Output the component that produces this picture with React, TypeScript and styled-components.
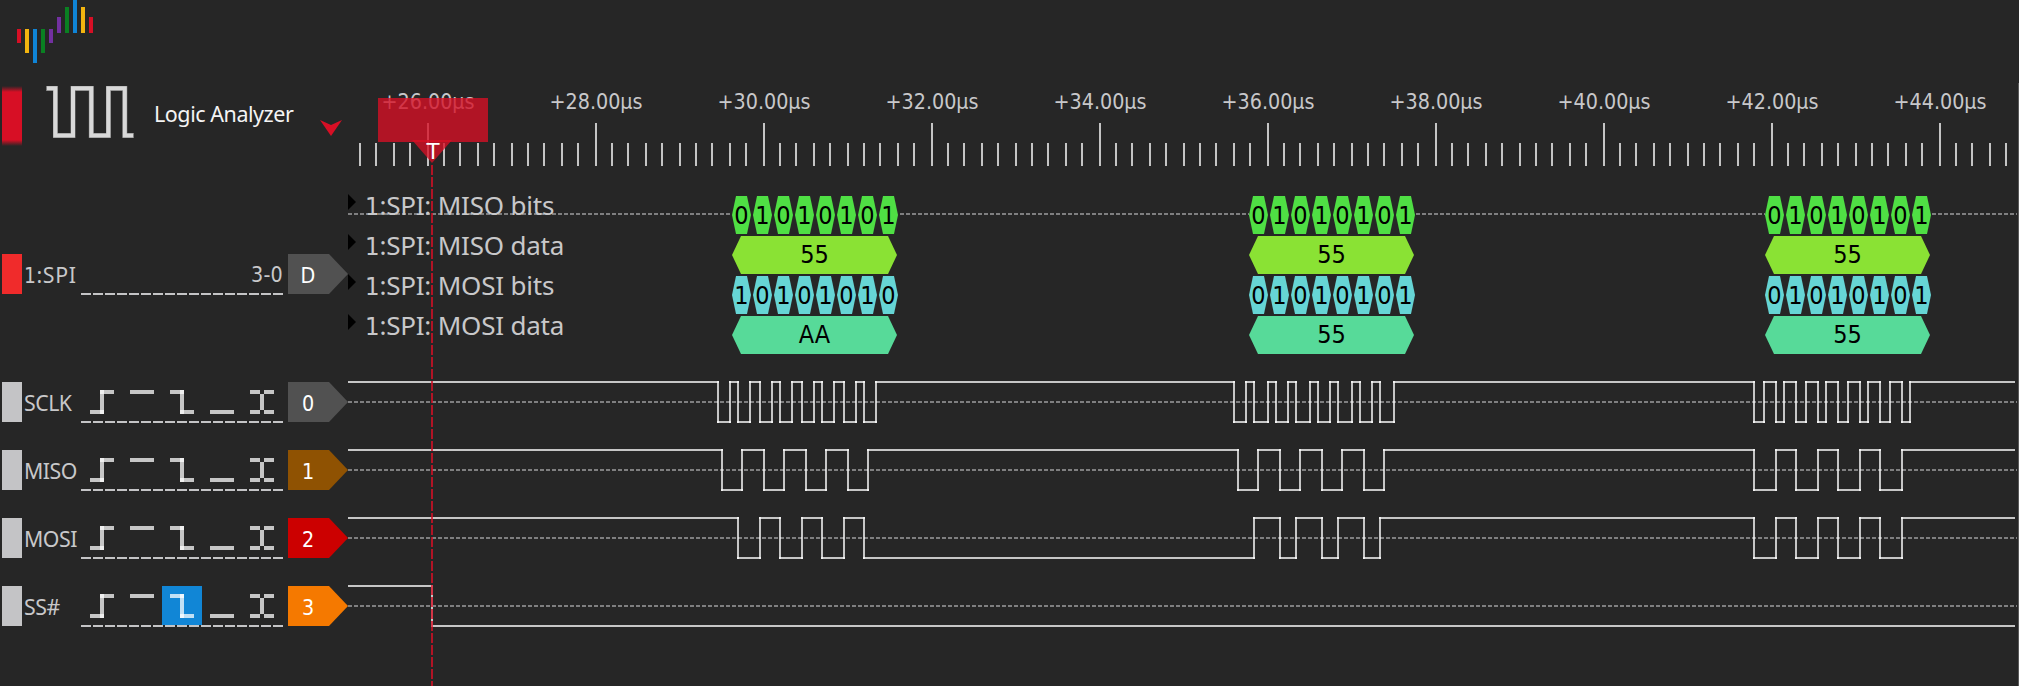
import React from 'react';
import styled, { createGlobalStyle } from 'styled-components';

const INK = 'rgba(255, 255, 255, 0.74)';
const RED = '#d70f25';

const GlobalStyle = createGlobalStyle`
  body {
    margin: 0;
    background: #262626;
    overflow: hidden;
  }
  * { box-sizing: border-box; }
  svg { display: block; flex: none; }
`;

const Screen = styled.div`
  width: 2019px;
  height: 686px;
  display: flex;
  flex-direction: column;
  background: #262626;
  color: #c8c8ca;
  font-family: 'Noto Sans', sans-serif;
  overflow: hidden;
`;

const TopBar = styled.header`
  height: 83px;
  flex: none;
  padding-left: 17px;
`;

const Body = styled.main`
  flex: 1;
  display: flex;
  min-height: 0;
`;

const Sidebar = styled.aside`
  width: 348px;
  flex: none;
  display: flex;
  flex-direction: column;
`;

const DeviceHeader = styled.div`
  height: 171px;
  display: flex;
  align-items: flex-start;
  padding: 3px 6px 0 2px;
`;

const DeviceGrip = styled.div`
  width: 20px;
  height: 60px;
  margin-right: 24px;
  background: linear-gradient(transparent, ${RED} 6px, ${RED} 54px, transparent);
`;

const DeviceTitle = styled.div`
  width: 165px;
  margin: 13px 0 0 19px;
  font-size: 21.5px;
  line-height: 30px;
  letter-spacing: -0.45px;
  color: #f4f4f4;
  white-space: nowrap;
`;

const Chevron = styled.div`
  width: 22px;
  height: 16px;
  margin: 34px 0 0 1px;
  background: ${RED};
  clip-path: polygon(0 0, 50% 32%, 100% 0, 50% 100%);
`;

const ChannelRow = styled.div<{ $gap: number }>`
  height: 41px;
  margin-bottom: ${(p) => p.$gap}px;
  padding-left: 2px;
  display: flex;
  align-items: flex-start;
  flex: none;
`;

const Grip = styled.div<{ $color: string }>`
  width: 20px;
  height: 40px;
  background: ${(p) => p.$color};
`;

const ChannelName = styled.div<{ $tracking: number }>`
  width: 59px;
  padding: 6px 0 0 2px;
  font-size: 21.3px;
  line-height: 30px;
  letter-spacing: ${(p) => p.$tracking}px;
  white-space: nowrap;
`;

const Controls = styled.div`
  width: 202px;
  height: 41px;
  display: flex;
  padding-left: 1px;
  background: repeating-linear-gradient(90deg, #c4c4c6 0 10px, transparent 10px 12px) 0 39px / 202px 2px no-repeat;
`;

const Range = styled.div`
  flex: 1;
  padding-top: 6px;
  text-align: right;
  font: 21.3px/30px 'DejaVu Sans Condensed', 'DejaVu Sans', sans-serif;
  letter-spacing: 0.2px;
`;

const TriggerButton = styled.div<{ $active: boolean }>`
  width: 40px;
  height: ${(p) => (p.$active ? 39 : 40)}px;
  background: ${(p) => (p.$active ? '#1186d6' : 'transparent')};
`;

const Tag = styled.div<{ $color: string }>`
  width: 60px;
  height: 40px;
  margin-left: 5px;
  padding-right: 20px;
  background: ${(p) => p.$color};
  clip-path: polygon(0 0, 41px 0, 100% 50%, 41px 100%, 0 100%);
  color: #fff;
  text-align: center;
  font: 21.3px/43px 'DejaVu Sans Condensed', 'DejaVu Sans', sans-serif;
`;

const Numeral = styled.span`
  font-family: 'DejaVu Sans Condensed', 'DejaVu Sans', sans-serif;
  font-size: 0.98em;
`;

const Plot = styled.section`
  position: relative;
  flex: 1;
  min-width: 0;
  display: flex;
  flex-direction: column;
  border-right: 1px solid #5a5a5a;
  overflow: hidden;
`;

const Ruler = styled.div`
  height: 83px;
  flex: none;
  display: flex;
  flex-direction: column;
`;

const RulerLabels = styled.div`
  display: flex;
  height: 40px;
  margin-left: -4px;
`;

const RulerLabel = styled.div`
  width: 168px;
  flex: none;
  padding-top: 4px;
  text-align: center;
  font: 21.3px/30px 'DejaVu Sans Condensed', 'DejaVu Sans', sans-serif;
  letter-spacing: -0.02px;
`;

const DecoderArea = styled.div`
  position: relative;
  height: 215px;
  flex: none;
  padding-top: 28px;
  display: flex;
  flex-direction: column;
`;

const BaseLine = styled.div<{ $top: number }>`
  position: absolute;
  left: 0;
  right: 1px;
  top: ${(p) => p.$top}px;
  height: 2px;
  background: repeating-linear-gradient(90deg, #7f7f80 0 4px, transparent 4px 6px);
`;

const DecoderRow = styled.div`
  position: relative;
  height: 40px;
  display: flex;
`;

const DecoderLabel = styled.div`
  width: 384px;
  display: flex;
  align-items: flex-start;
`;

const DecoderText = styled.span`
  margin-top: -4px;
  font-size: 26px;
  line-height: 30px;
  letter-spacing: -0.2px;
  white-space: pre;
`;

const Expander = styled.i`
  width: 8px;
  height: 16px;
  margin-right: 9px;
  background: #000;
  clip-path: polygon(0 0, 100% 50%, 0 100%);
`;

const FrameGroup = styled.div<{ $after: number }>`
  display: flex;
  width: 167px;
  height: 38px;
  flex: none;
  margin: 2px ${(p) => p.$after}px 0 0;
  background: #262626;
`;

const BitCell = styled.span<{ $color: string }>`
  width: 19px;
  height: 38px;
  flex: none;
  margin-right: 2px;
  background: ${(p) => p.$color};
  clip-path: polygon(0 50%, 4px 0, 15px 0, 100% 50%, 15px 100%, 4px 100%);
  color: #000;
  font: 25px/39px 'DejaVu Sans Condensed', 'DejaVu Sans', sans-serif;
  display: flex;
  justify-content: center;
`;

const DataCell = styled.span<{ $color: string }>`
  width: 165px;
  height: 38px;
  background: ${(p) => p.$color};
  clip-path: polygon(0 50%, 9px 0, 156px 0, 100% 50%, 156px 100%, 9px 100%);
  color: #000;
  text-align: center;
  font: 25px/38px 'DejaVu Sans Condensed', 'DejaVu Sans', sans-serif;
`;

const SignalRow = styled.div`
  position: relative;
  height: 42px;
  margin-bottom: 26px;
  flex: none;
`;

const WaveDrawing = styled.svg`
  position: relative;
`;

const TriggerFlag = styled.div`
  position: absolute;
  left: 30px;
  top: 15px;
  width: 110px;
  height: 44px;
  background: rgba(215, 15, 37, 0.79);
`;

const TriggerPointer = styled.div`
  position: absolute;
  left: 64px;
  top: 57px;
  width: 40px;
  height: 23px;
  background: rgba(215, 15, 37, 0.79);
  clip-path: polygon(0 0, 100% 0, 50% 100%);
`;

const TriggerLetter = styled.div`
  position: absolute;
  left: 74px;
  top: 57px;
  width: 22px;
  text-align: center;
  font: 21.3px/23px 'DejaVu Sans', sans-serif;
  color: #fff;
`;

const TriggerLine = styled.div`
  position: absolute;
  left: 83px;
  top: 82px;
  bottom: 0;
  width: 2px;
  background: repeating-linear-gradient(180deg, rgba(215, 15, 37, 0.79) 0 10px, transparent 10px 12px);
`;

const Logo = () => {
  const colors = ['#d70f25', '#f2b40f', '#0f84d6', '#0a8022', '#7230a0'];
  const lower = [14, 24, 34, 24, 14];
  const upper = [16, 26, 33, 26, 16];
  return (
    <svg width="76" height="64">
      {colors.map((c, i) => (
        <rect key={c} x={i * 8} y={29} width={4} height={lower[i]} fill={c} />
      ))}
      {[...colors].reverse().map((c, i) => (
        <rect key={c} x={40 + i * 8} y={33 - upper[i]} width={4} height={upper[i]} fill={c} />
      ))}
    </svg>
  );
};

const AnalyzerIcon = () => (
  <svg width="89" height="54">
    <path
      d="M0 2.5H9.5V49.5H27V2.5H45.3V49.5H62.5V2.5H78.8V49.5H88"
      fill="none"
      stroke="#7d7d7d"
      strokeWidth="5"
    />
    <path
      d="M1 2.3H9.3V49.5H27V2.3H45.3V49.5H62.3V2.3H78.8V49.5H87"
      fill="none"
      stroke="#d9d9d9"
      strokeWidth="4"
    />
  </svg>
);

type Box = [number, number, number, number];

// Bars of each trigger condition: rising, high, falling, low, change.
const triggers: Box[][] = [
  [[8, 28, 14, 4], [18, 8, 4, 24], [18, 8, 14, 4]],
  [[8, 8, 24, 4]],
  [[8, 8, 14, 4], [18, 8, 4, 24], [18, 28, 14, 4]],
  [[8, 28, 24, 4]],
  [[8, 8, 10, 4], [22, 8, 10, 4], [18, 12, 4, 16], [8, 28, 10, 4], [22, 28, 10, 4]],
];

const Triggers = ({ active }: { active?: number }) => (
  <>
    {triggers.map((bars, i) => (
      <TriggerButton key={i} $active={i === active}>
        <svg width="40" height="39">
          {bars.map(([x, y, w, h], k) => (
            <rect key={k} x={x} y={y} width={w} height={h} fill={INK} />
          ))}
        </svg>
      </TriggerButton>
    ))}
  </>
);

const ORIGIN = 348;
const END = 2015;

const Wave = ({ edges }: { edges: number[] }) => {
  const points = [ORIGIN + 1, ...edges, END - 1];
  return (
    <WaveDrawing width="1670" height="42" shapeRendering="crispEdges">
      {points.slice(0, -1).map((x, i) => (
        <rect
          key={x}
          x={x - ORIGIN - 1}
          y={i % 2 ? 40 : 0}
          width={points[i + 1] - x + 2}
          height={2}
          fill={INK}
        />
      ))}
      {edges.map((x) => (
        <rect key={x} x={x - ORIGIN - 1} y={0} width={2} height={42} fill={INK} />
      ))}
    </WaveDrawing>
  );
};

const signals = [
  {
    name: 'SCLK', tag: '0', color: '#515151',
    edges: [718, 730, 738, 750, 760, 772, 780, 792, 802, 814, 822, 834, 844, 856, 864, 876,
      1234, 1246, 1254, 1268, 1276, 1288, 1296, 1310, 1318, 1330, 1338, 1352, 1360, 1372, 1380, 1394,
      1754, 1764, 1776, 1784, 1796, 1806, 1818, 1826, 1838, 1848, 1860, 1868, 1880, 1890, 1902, 1910],
  },
  {
    name: 'MISO', tag: '1', color: '#8f5202',
    edges: [722, 742, 764, 784, 806, 826, 848, 868, 1238, 1258, 1280, 1300, 1322, 1342, 1364, 1384,
      1754, 1776, 1796, 1818, 1838, 1860, 1880, 1902],
  },
  {
    name: 'MOSI', tag: '2', color: '#cc0000',
    edges: [738, 760, 780, 802, 822, 844, 864, 1254, 1280, 1296, 1322, 1338, 1364, 1380,
      1754, 1776, 1796, 1818, 1838, 1860, 1880, 1902],
  },
  { name: 'SS#', tag: '3', color: '#f57900', edges: [432], active: 2 },
];

const decoders = [
  { label: 'MISO bits', color: '#4fdf44', bits: true, frames: ['01010101', '01010101', '01010101'] },
  { label: 'MISO data', color: '#8ae234', bits: false, frames: ['55', '55', '55'] },
  { label: 'MOSI bits', color: '#66d5d5', bits: true, frames: ['10101010', '01010101', '01010101'] },
  { label: 'MOSI data', color: '#57da99', bits: false, frames: ['AA', '55', '55'] },
];

const frameGaps = [350, 349, 0];
const times = [26, 28, 30, 32, 34, 36, 38, 40, 42, 44];
const tickOffsets = [0, 16, 32, 50, 66, 84, 100, 116, 134, 150];

const Ticks = () => {
  const ticks: { x: number; major: boolean }[] = [];
  for (let k = -1; k < 10; k++) {
    tickOffsets.forEach((o, i) => {
      const x = 80 + k * 168 + o;
      if (x >= 12 && x <= 1658) ticks.push({ x, major: i === 0 });
    });
  }
  return (
    <svg width="1670" height="43" shapeRendering="crispEdges">
      {ticks.map(({ x, major }) => (
        <rect key={x} x={x - 1} y={major ? 0 : 20} width={2} height={major ? 43 : 23} fill="#c4c4c4" />
      ))}
    </svg>
  );
};

export default function App() {
  return (
    <Screen>
      <GlobalStyle />
      <TopBar>
        <Logo />
      </TopBar>
      <Body>
        <Sidebar>
          <DeviceHeader>
            <DeviceGrip />
            <AnalyzerIcon />
            <DeviceTitle>Logic Analyzer</DeviceTitle>
            <Chevron />
          </DeviceHeader>
          <ChannelRow $gap={87}>
            <Grip $color="#f02b2b" />
            <ChannelName $tracking={0.6}><Numeral>1</Numeral>:SPI</ChannelName>
            <Controls><Range>3-0</Range></Controls>
            <Tag $color="#515151">D</Tag>
          </ChannelRow>
          {signals.map((s) => (
            <ChannelRow key={s.name} $gap={27}>
              <Grip $color="#c4c4c6" />
              <ChannelName $tracking={-0.5}>{s.name}</ChannelName>
              <Controls><Triggers active={s.active} /></Controls>
              <Tag $color={s.color}>{s.tag}</Tag>
            </ChannelRow>
          ))}
        </Sidebar>
        <Plot>
          <Ruler>
            <RulerLabels>
              {times.map((t) => <RulerLabel key={t}>+{t}.00µs</RulerLabel>)}
            </RulerLabels>
            <Ticks />
          </Ruler>
          <DecoderArea>
            <BaseLine $top={47} />
            {decoders.map((d) => (
              <DecoderRow key={d.label}>
                <DecoderLabel>
                  <Expander />
                  <DecoderText><Numeral>1</Numeral>:SPI: {d.label}</DecoderText>
                </DecoderLabel>
                {d.frames.map((f, i) => (
                  <FrameGroup key={i} $after={frameGaps[i]}>
                    {d.bits
                      ? f.split('').map((b, k) => <BitCell key={k} $color={d.color}>{b}</BitCell>)
                      : <DataCell $color={d.color}>{f}</DataCell>}
                  </FrameGroup>
                ))}
              </DecoderRow>
            ))}
          </DecoderArea>
          {signals.map((s) => (
            <SignalRow key={s.name}>
              <BaseLine $top={20} />
              <Wave edges={s.edges} />
            </SignalRow>
          ))}
          <TriggerFlag />
          <TriggerPointer />
          <TriggerLetter>T</TriggerLetter>
          <TriggerLine />
        </Plot>
      </Body>
    </Screen>
  );
}
